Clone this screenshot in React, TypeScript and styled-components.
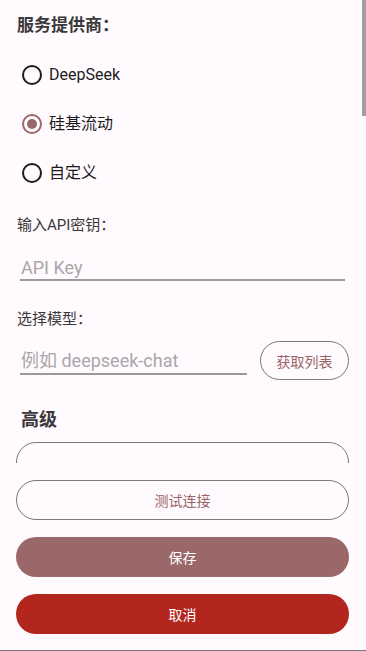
import React, { useState } from "react";
import styled, { createGlobalStyle } from "styled-components";

const GlobalStyle = createGlobalStyle`
  html, body {
    margin: 0;
    padding: 0;
    background: #fffafd;
  }
  * {
    box-sizing: border-box;
  }
  body {
    font-family: Roboto, "Noto Sans CJK SC", sans-serif;
  }
`;

const Page = styled.div`
  width: 366px;
  height: 651px;
  display: flex;
  flex-direction: column;
  background: #fffafd;
  border-bottom: 1px solid #767276;
`;

const ScrollArea = styled.div`
  position: relative;
  height: 463px;
  flex: none;
  overflow: hidden;
  padding: 14px 17px 0 16px;
`;

const ScrollThumb = styled.div`
  position: absolute;
  top: 0;
  right: 0;
  width: 4px;
  height: 116px;
  background: #a19da1;
`;

const SectionTitle = styled.div<{ $indent?: number; $top?: number }>`
  margin-top: ${(p) => p.$top ?? 0}px;
  font-size: ${(p) => (p.$indent ? 18 : 17)}px;
  line-height: ${(p) => (p.$indent ? 24 : 22)}px;
  font-weight: 700;
  color: #3a383a;
  padding-left: ${(p) => p.$indent ?? 1}px;
`;

const RadioGroup = styled.div`
  margin-top: 14px;
  display: flex;
  flex-direction: column;
`;

const RadioRow = styled.label`
  height: 49px;
  display: flex;
  align-items: center;
  padding-left: 6px;
  gap: 7px;
  cursor: pointer;
`;

const RadioCircle = styled.span<{ $checked: boolean }>`
  width: 20px;
  height: 20px;
  border-radius: 50%;
  border: 2px solid ${(p) => (p.$checked ? "#9a6869" : "#1d1b1e")};
  display: flex;
  align-items: center;
  justify-content: center;
  &::after {
    content: "";
    width: 10px;
    height: 10px;
    border-radius: 50%;
    background: ${(p) => (p.$checked ? "#9a6869" : "transparent")};
  }
`;

const RadioText = styled.span`
  font-size: 16px;
  color: #1d1b1e;
  line-height: 20px;
`;

const FieldLabel = styled.div<{ $top: number }>`
  margin-top: ${(p) => p.$top}px;
  padding-left: 1px;
  font-size: 15px;
  line-height: 20px;
  color: #3a383a;
`;

const TextInput = styled.input`
  display: block;
  width: 100%;
  height: 38px;
  padding: 12px 1px 0;
  border: none;
  border-bottom: 2px solid #9c989c;
  background: transparent;
  font-family: Roboto, "Noto Sans CJK SC", sans-serif;
  font-size: 18px;
  line-height: 24px;
  color: #1d1b1e;
  outline: none;
  &::placeholder {
    color: #aaa6aa;
  }
`;

const KeyField = styled.div`
  margin: 8px 4px 0;
`;

const ModelRow = styled.div`
  margin-top: 8px;
  display: flex;
  align-items: flex-start;
  padding-left: 4px;
`;

const ModelField = styled.div`
  flex: 1;
  ${TextInput} {
    padding-top: 11px;
  }
`;

const PillButton = styled.button<{ $variant: "outline" | "primary" | "danger" }>`
  height: 40px;
  border-radius: 20px;
  font-family: Roboto, "Noto Sans CJK SC", sans-serif;
  font-size: 14px;
  cursor: pointer;
  border: ${(p) => (p.$variant === "outline" ? "1px solid #7b767a" : "none")};
  background: ${(p) =>
    p.$variant === "primary" ? "#9a6869" : p.$variant === "danger" ? "#b3261e" : "transparent"};
  color: ${(p) => (p.$variant === "outline" ? "#9a6467" : "#ffffff")};
`;

const FetchButton = styled(PillButton)`
  margin: 4px 0 0 13px;
  width: 89px;
  height: 39px;
  flex: none;
`;

const WideButton = styled(PillButton)`
  display: block;
  width: 100%;
`;

/* the advanced options card: only its rounded top edge is scrolled into view */
const AdvancedCard = styled.div`
  margin-top: 10px;
  height: 60px;
  border: 1px solid #7b767a;
  border-radius: 20px;
`;

const Footer = styled.div`
  flex: 1;
  display: flex;
  flex-direction: column;
  gap: 17px;
  padding: 17px 17px 0 16px;
`;

const providers = ["DeepSeek", "硅基流动", "自定义"];

export default function App() {
  const [provider, setProvider] = useState("硅基流动");

  return (
    <>
      <GlobalStyle />
      <Page>
        <ScrollArea>
          <SectionTitle>服务提供商：</SectionTitle>
          <RadioGroup>
            {providers.map((name) => (
              <RadioRow key={name} onClick={() => setProvider(name)}>
                <RadioCircle $checked={provider === name} />
                <RadioText>{name}</RadioText>
              </RadioRow>
            ))}
          </RadioGroup>

          <FieldLabel $top={18}>输入API密钥：</FieldLabel>
          <KeyField>
            <TextInput placeholder="API Key" />
          </KeyField>

          <FieldLabel $top={28}>选择模型：</FieldLabel>
          <ModelRow>
            <ModelField>
              <TextInput placeholder="例如 deepseek-chat" />
            </ModelField>
            <FetchButton $variant="outline">获取列表</FetchButton>
          </ModelRow>

          <SectionTitle $indent={5} $top={28}>高级</SectionTitle>
          <AdvancedCard />

          <ScrollThumb />
        </ScrollArea>

        <Footer>
          <WideButton $variant="outline">测试连接</WideButton>
          <WideButton $variant="primary">保存</WideButton>
          <WideButton $variant="danger">取消</WideButton>
        </Footer>
      </Page>
    </>
  );
}
